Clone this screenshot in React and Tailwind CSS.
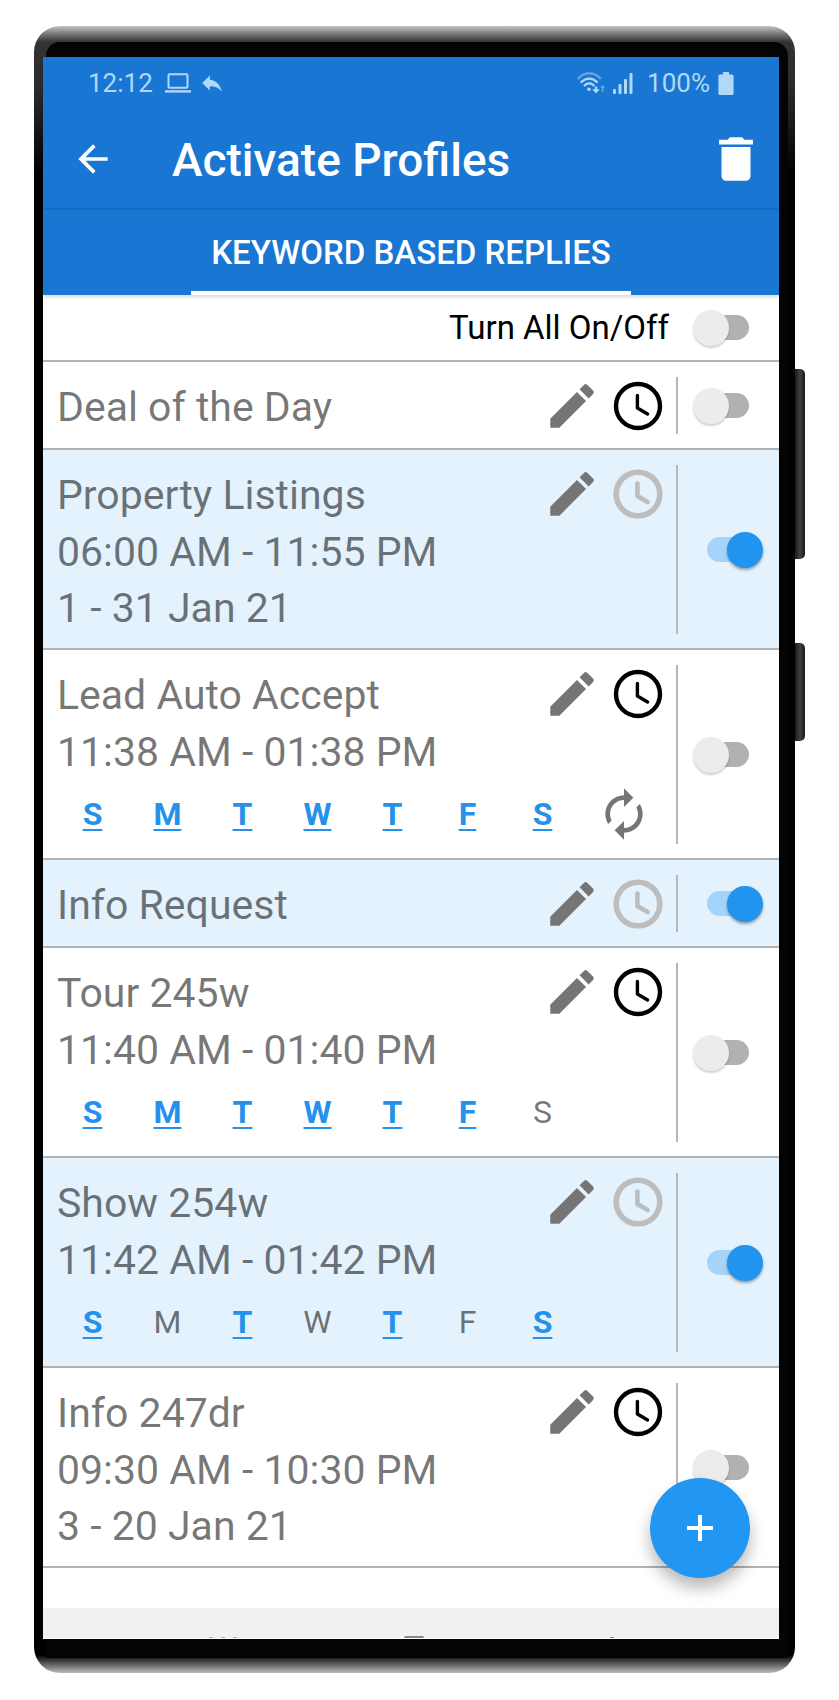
import React, { useState } from "react";
import { MdArrowBack, MdAutorenew, MdDelete, MdEdit, MdReply } from "react-icons/md";

const DAYS = ["S", "M", "T", "W", "T", "F", "S"];

const DAY_NAMES = ["Sunday", "Monday", "Tuesday", "Wednesday", "Thursday", "Friday", "Saturday"];

const PROFILES = [
  { id: 1, name: "Deal of the Day", active: false },
  { id: 2, name: "Property Listings", time: "06:00 AM - 11:55 PM", dates: "1 - 31 Jan 21", active: true },
  { id: 3, name: "Lead Auto Accept", time: "11:38 AM - 01:38 PM", days: [0, 1, 2, 3, 4, 5, 6], repeat: true, active: false },
  { id: 4, name: "Info Request", active: true },
  { id: 5, name: "Tour 245w", time: "11:40 AM - 01:40 PM", days: [0, 1, 2, 3, 4, 5], active: false },
  { id: 6, name: "Show 254w", time: "11:42 AM - 01:42 PM", days: [0, 2, 4, 6], active: true },
  { id: 7, name: "Info 247dr", time: "09:30 AM - 10:30 PM", dates: "3 - 20 Jan 21", active: false },
];

function cn(...classes) {
  return classes.filter(Boolean).join(" ");
}

function ClockIcon({ muted }) {
  return (
    <svg
      viewBox="0 0 58 58"
      className={cn("size-[58px]", muted ? "text-[#bdbdbd]" : "text-black")}
      fill="none"
      stroke="currentColor"
      strokeLinecap="round"
      strokeLinejoin="round"
      aria-hidden="true"
    >
      <circle cx="29" cy="29" r={muted ? 21.8 : 22} strokeWidth={muted ? 5.6 : 4.4} />
      <path d="M28.4 18.5V31l10.2 6" strokeWidth={muted ? 4.6 : 3.4} />
    </svg>
  );
}

function Switch({ label, checked, onChange }) {
  return (
    <label className="relative flex h-9 w-[70px] shrink-0 cursor-pointer items-center px-[14px]">
      <input type="checkbox" role="switch" aria-label={label} checked={checked} onChange={onChange} className="peer sr-only" />
      <span className="h-[25px] w-full rounded-full bg-[#b1b1b1] peer-checked:bg-[#a5d4fa]" />
      <span className="absolute top-0 left-0 size-9 rounded-full bg-[#ececec] shadow-[0_2px_2px_rgba(0,0,0,0.18)] peer-checked:right-0 peer-checked:left-auto peer-checked:bg-[#2094ee] peer-checked:shadow-[0_2px_3px_rgba(0,0,0,0.35)]" />
    </label>
  );
}

function StatusBar() {
  return (
    <div className="flex h-[52px] items-center justify-between pr-[45px] pl-[45px] text-[26px] leading-8 text-[#b0d8f8]">
      <div className="flex items-center gap-3">
        <span>12:12</span>
        <svg viewBox="0 0 26 20" className="h-5 w-[26px]" fill="none" stroke="currentColor" strokeWidth="2" aria-hidden="true">
          <rect x="3.5" y="1.2" width="19" height="13.6" rx="1" />
          <path d="M0 18.4h26" strokeWidth="2.4" />
        </svg>
        <MdReply className="-ml-1 size-[26px]" aria-hidden="true" />
      </div>
      <div className="flex items-center gap-2">
        <svg viewBox="0 0 28 22" className="h-[22px] w-7" fill="none" stroke="currentColor" strokeLinecap="round" aria-hidden="true">
          <path d="M1.5 6.2C7.5-.2 17-.2 23 6.2" strokeWidth="2.4" opacity=".5" />
          <path d="M4.4 10C8.8 5.4 15.6 5.4 20 10" strokeWidth="2.2" />
          <path d="M7.6 13.4c2.6-2.7 6.6-2.7 9.2 0" strokeWidth="2.2" />
          <circle cx="12" cy="17.3" r="1.8" fill="currentColor" stroke="none" />
          <path d="M17.8 15.6v1.6h-2.6l3.8 4.2 3.8-4.2h-2.6v-2.6h-2z" fill="currentColor" stroke="none" />
          <path d="M24.8 20v-4h-1.6l2.4-3.4 2.4 3.4h-1.6v4z" fill="currentColor" stroke="none" opacity=".5" />
        </svg>
        <svg viewBox="0 0 20 21" className="h-[21px] w-5" fill="currentColor" aria-hidden="true">
          <rect x="0" y="16" width="3" height="5" rx="1" />
          <rect x="5.5" y="11" width="3" height="10" rx="1" />
          <rect x="11" y="6" width="3" height="15" rx="1" />
          <rect x="16.5" y="0" width="3" height="21" rx="1" />
        </svg>
        <span className="ml-1.5">100%</span>
        <svg viewBox="0 0 16 23" className="h-[23px] w-4" fill="currentColor" aria-hidden="true">
          <path d="M5 0h6v2.6h3a1.6 1.6 0 0 1 1.6 1.6v17.2A1.6 1.6 0 0 1 14 23H2a1.6 1.6 0 0 1-1.6-1.6V4.2A1.6 1.6 0 0 1 2 2.6h3z" />
        </svg>
      </div>
    </div>
  );
}

function Header() {
  return (
    <header className="relative bg-[#1976d2] text-white shadow-[0_2px_4px_rgba(0,0,0,0.16)]">
      <StatusBar />
      <div className="flex h-[101px] items-center border-b-2 border-[#176bc4] pr-[14px] pl-[28px]">
        <button type="button" aria-label="Back">
          <MdArrowBack className="size-11" />
        </button>
        <h1 className="ml-[57px] flex-1 pt-1 text-[46px] leading-[53px] font-medium">Activate Profiles</h1>
        <button type="button" aria-label="Delete profiles">
          <MdDelete className="size-[58px]" />
        </button>
      </div>
      <nav className="flex h-[85px] justify-center">
        <button type="button" className="border-b-4 border-white px-5 pt-1 text-[33px] leading-10 font-medium">
          KEYWORD BASED REPLIES
        </button>
      </nav>
    </header>
  );
}

function DayPicker({ name, days, repeat, onToggleDay }) {
  return (
    <div className="flex h-[61px] items-center pl-3">
      {DAYS.map((day, index) => {
        const selected = days.includes(index);
        return (
          <button
            key={index}
            type="button"
            aria-label={`${DAY_NAMES[index]}, ${name}`}
            aria-pressed={selected}
            onClick={() => onToggleDay(index)}
            className={cn(
              "w-[75px] text-[32px] leading-[38px]",
              selected
                ? "font-bold text-[#2491ea] underline decoration-2 underline-offset-4"
                : "text-black/54"
            )}
          >
            {day}
          </button>
        );
      })}
      {repeat && (
        <button type="button" aria-label="Repeat every week" className="ml-4">
          <MdAutorenew className="size-14 text-[#757575]" />
        </button>
      )}
    </div>
  );
}

function ProfileRow({ profile, onToggle, onToggleDay }) {
  return (
    <li className={cn("flex border-b-2 border-[#b0b2b4] pt-[15px] pb-[14px]", profile.active ? "bg-[#e3f2fd]" : "bg-white")}>
      <div className="min-w-0 flex-1 text-[41px] text-black/54">
        <div className="flex h-[57px] items-center gap-2 pr-[9px] pl-[14px]">
          <h2 className="flex-1 pt-1 leading-[57px]">{profile.name}</h2>
          <button type="button" aria-label={`Edit ${profile.name}`}>
            <MdEdit className="size-[58px] text-[#757575]" />
          </button>
          <button type="button" aria-label={`Schedule ${profile.name}`}>
            <ClockIcon muted={profile.active} />
          </button>
        </div>
        {profile.time && <p className="pl-[14px] leading-[61px]">{profile.time}</p>}
        {profile.dates && <p className="pl-[14px] leading-[51px]">{profile.dates}</p>}
        {profile.days && (
          <DayPicker name={profile.name} days={profile.days} repeat={profile.repeat} onToggleDay={onToggleDay} />
        )}
      </div>
      <div className="flex items-center border-l-2 border-[#b3b8be] pr-4 pl-[15px]">
        <Switch label={`Activate ${profile.name}`} checked={profile.active} onChange={onToggle} />
      </div>
    </li>
  );
}

export default function App() {
  const [profiles, setProfiles] = useState(PROFILES);
  const allOn = profiles.every((p) => p.active);

  const handleToggle = (id) => {
    setProfiles(profiles.map((p) => (p.id === id ? { ...p, active: !p.active } : p)));
  };

  const handleToggleAll = () => {
    setProfiles(profiles.map((p) => ({ ...p, active: !allOn })));
  };

  const handleToggleDay = (id, day) => {
    setProfiles(
      profiles.map((p) => {
        if (p.id !== id) return p;
        const days = p.days.includes(day) ? p.days.filter((d) => d !== day) : [...p.days, day];
        return { ...p, days };
      })
    );
  };

  return (
    <div className="bg-white pt-[26px] pr-[44px] pb-[27px] pl-[34px] font-[Roboto,sans-serif]">
      {/* phone body */}
      <div className="relative rounded-[26px] bg-[linear-gradient(to_bottom,#c4c4c4_0px,#8a8a8a_6px,#333_16px,#2c2c2c_60px,#000_150px,#000_calc(100%-18px),#bbb_100%)] pt-4 pr-[7px] pb-[15px] pl-3">
        <span className="absolute top-[343px] -right-[10px] h-[190px] w-[10px] rounded-r-[5px] bg-linear-to-r from-[#1a1a1a] via-[#404040] to-[#1a1a1a]" />
        <span className="absolute top-[617px] -right-[10px] h-[98px] w-[10px] rounded-r-[5px] bg-linear-to-r from-[#1a1a1a] via-[#404040] to-[#1a1a1a]" />

        <div className="rounded-t-[14px] bg-[#040404] pt-[15px] pr-[9px] pb-[19px]">
          <main className="relative -ml-[3px] bg-white">
            <Header />

            <div className="flex h-[67px] items-center justify-end gap-6 border-b-2 border-[#b0b2b4] pr-4">
              <span className="text-[33px] leading-10 text-black">Turn All On/Off</span>
              <Switch label="Turn All On/Off" checked={allOn} onChange={handleToggleAll} />
            </div>

            <ul>
              {profiles.map((profile) => (
                <ProfileRow
                  key={profile.id}
                  profile={profile}
                  onToggle={() => handleToggle(profile.id)}
                  onToggleDay={(day) => handleToggleDay(profile.id, day)}
                />
              ))}
            </ul>

            <div className="h-10" />

            {/* system navigation, only its top edge is on screen */}
            <div className="flex h-[31px] items-end justify-between border-b border-white bg-[#f1f1f1] pr-[165px] pl-[166px]">
              <span className="flex gap-2">
                <span className="h-px w-1 bg-[#aaa]" />
                <span className="h-px w-1 bg-[#aaa]" />
                <span className="h-px w-1 bg-[#aaa]" />
              </span>
              <span className="mr-5 h-0.5 w-5 rounded-t-full bg-[#888]" />
              <span className="h-px w-1 bg-[#888]" />
            </div>

            <button
              type="button"
              aria-label="Add profile"
              className="absolute right-[29px] bottom-[61px] flex size-[100px] items-center justify-center rounded-full bg-[#2196f3] text-white shadow-[0_10px_16px_rgba(0,0,0,0.28)]"
            >
              <svg viewBox="0 0 26 26" className="size-[26px]" stroke="currentColor" strokeWidth="4" aria-hidden="true">
                <path d="M13 0v26M0 13h26" />
              </svg>
            </button>
          </main>
        </div>
      </div>
    </div>
  );
}
